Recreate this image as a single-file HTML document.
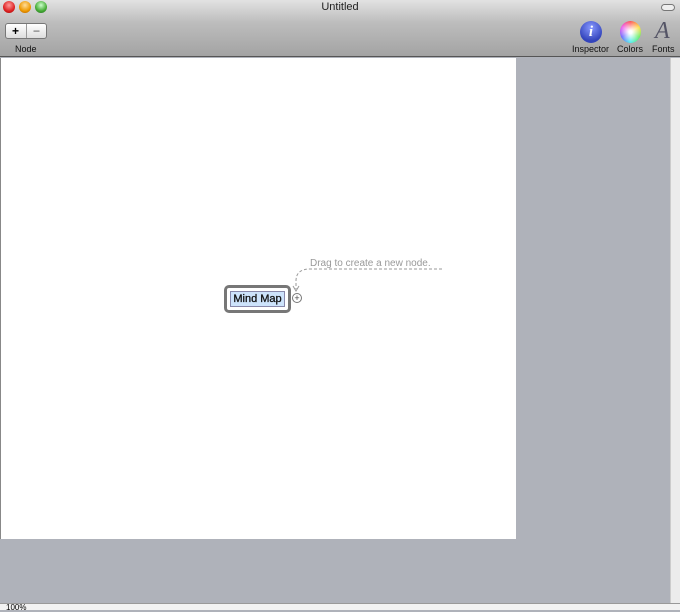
<!DOCTYPE html>
<html><head><style>
*{margin:0;padding:0;box-sizing:border-box}
body{width:680px;height:610px;overflow:hidden;position:relative;font-family:"Liberation Sans",sans-serif;background:#afb2ba}
#bar{position:absolute;left:0;top:0;width:680px;height:57px;background:linear-gradient(#e2e2e2,#bdbdbd 40%,#a3a3a3);border-bottom:1px solid #555}
.tl{position:absolute;top:1px;width:12px;height:12px;border-radius:50%}
#canvas{position:absolute;left:0;top:58px;width:516px;height:481px;background:#fff;border-left:1px solid #888}
#sb{position:absolute;left:670px;top:58px;width:10px;height:545px;background:#ececec;border-left:1px solid #ccc}
#bot{position:absolute;left:0;top:603px;width:680px;height:7px;background:#f2f2f2;border-top:1px solid #999;font-size:8px}
.lbl{position:absolute;font-size:9px;color:#111}
</style></head><body>
<div id="bar">
<div class="tl" style="left:3px;background:radial-gradient(circle at 50% 35%,#f99,#d22 60%,#900)"></div>
<div class="tl" style="left:19px;background:radial-gradient(circle at 50% 35%,#fd9,#e90 60%,#a50)"></div>
<div class="tl" style="left:35px;background:radial-gradient(circle at 50% 35%,#cfc,#4a3 60%,#262)"></div>
<div style="position:absolute;left:0;width:680px;top:1px;text-align:center;font-size:11px;color:#222">Untitled</div>
<div style="position:absolute;left:661px;top:4px;width:14px;height:7px;border:1px solid #777;border-radius:4px;background:#eee"></div>
<div style="position:absolute;left:5px;top:23px;width:42px;height:16px;border:1px solid #777;border-radius:3px;background:linear-gradient(#fff,#ddd);font-size:12px;font-weight:bold;line-height:14px">
<span style="position:absolute;left:6px">+</span><span style="position:absolute;left:20px;top:0;width:1px;height:14px;background:#999"></span><span style="position:absolute;left:27px;color:#888">−</span></div>
<div class="lbl" style="left:15px;top:44px">Node</div>
<div style="position:absolute;left:580px;top:21px;width:22px;height:22px;border-radius:50%;background:radial-gradient(circle at 50% 30%,#89f,#34b 70%);color:#fff;font:italic bold 15px 'Liberation Serif',serif;text-align:center;line-height:22px">i</div>
<div style="position:absolute;left:620px;top:21px;width:21px;height:22px;border-radius:50%;background:radial-gradient(circle,#fff 10%,transparent 70%),conic-gradient(#f55,#fd4,#6e6,#5ee,#66f,#e5e,#f55)"></div>
<div style="position:absolute;left:655px;top:18px;font:italic 24px 'Liberation Serif',serif;color:#556">A</div>
<div class="lbl" style="left:572px;top:44px">Inspector</div>
<div class="lbl" style="left:617px;top:44px">Colors</div>
<div class="lbl" style="left:652px;top:44px">Fonts</div>
</div>
<div id="canvas"></div>
<div id="sb"></div>
<div style="position:absolute;left:224px;top:285px;width:67px;height:28px;border:3px solid #777;border-radius:5px;background:#fff"></div>
<div style="position:absolute;left:230px;top:291px;width:55px;height:16px;border:1px solid #88a;background:#cde3fb;font-size:11px;line-height:14px;text-align:center;color:#111;-webkit-text-stroke:0.3px #111">Mind Map</div>
<div style="position:absolute;left:292px;top:293px;width:10px;height:10px;border:1px solid #777;border-radius:50%;font-size:9px;line-height:8px;text-align:center;color:#444;background:#fff">+</div>
<svg style="position:absolute;left:290px;top:255px" width="160" height="40"><path d="M152 14 H20 Q6 14 6 26 V34" fill="none" stroke="#999" stroke-dasharray="3,2"/><path d="M3 31 L6 36 L9 31" fill="none" stroke="#999"/></svg>
<div style="position:absolute;left:310px;top:258px;font-size:10px;color:#999">Drag to create a new node.</div>
<div id="bot"><span style="position:absolute;left:6px;top:-1px">100%</span></div>
</body></html>
